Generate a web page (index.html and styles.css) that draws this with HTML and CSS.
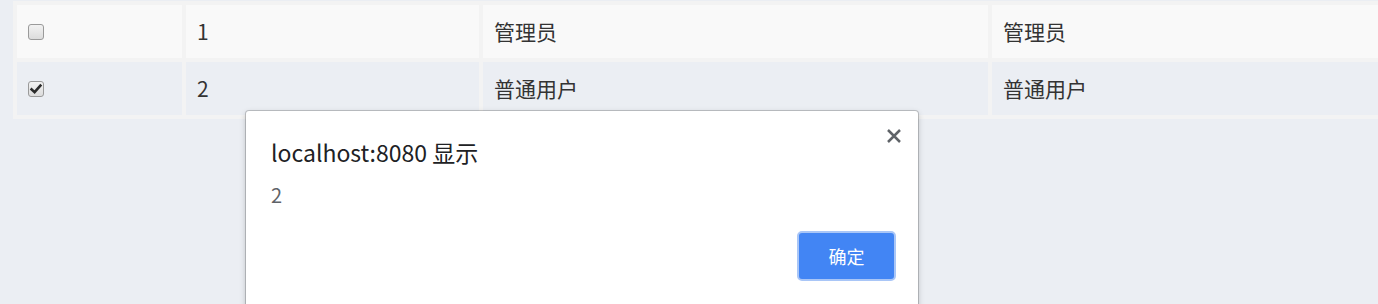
FILE: index.html
```html
<!DOCTYPE html>
<html lang="zh">
<head>
<meta charset="utf-8">
<title>用户列表</title>
<link rel="stylesheet" href="styles.css">
</head>
<body>
<div class="page">
  <table class="grid">
    <colgroup>
      <col class="c-check"><col class="c-id"><col class="c-name"><col class="c-desc">
    </colgroup>
    <tbody>
      <tr class="row odd">
        <td><span class="check"></span></td>
        <td>1</td>
        <td>管理员</td>
        <td>管理员</td>
      </tr>
      <tr class="row even">
        <td><span class="check checked"><svg viewBox="0 0 16 16" width="16" height="16"><path d="M3.6 8.4 L6.6 11.2 L12.4 4.6" fill="none" stroke="#2b2b2b" stroke-width="2.6" stroke-linecap="square" stroke-linejoin="miter"/></svg></span></td>
        <td>2</td>
        <td>普通用户</td>
        <td>普通用户</td>
      </tr>
    </tbody>
  </table>
</div>

<div class="dialog" role="alertdialog">
  <div class="dialog-head">
    <div class="dialog-title">localhost:8080 显示</div>
    <button class="dialog-close" aria-label="关闭"><svg viewBox="0 0 16 16" width="16" height="16"><path d="M2 2 L14 14 M14 2 L2 14" stroke="#5f6368" stroke-width="2.5" fill="none"/></svg></button>
  </div>
  <div class="dialog-msg">2</div>
  <div class="dialog-actions">
    <button class="btn-ok">确定</button>
  </div>
</div>
</body>
</html>
```

FILE: styles.css
```css
html, body {
  margin: 0;
  padding: 0;
}
body {
  width: 1378px;
  height: 304px;
  overflow: hidden;
  background: #ebeef3;
  font-family: "Noto Sans CJK SC", "Noto Sans", sans-serif;
  color: #333;
}
.page {
  padding: 1px 0 0 13px;
}
.grid {
  table-layout: fixed;
  width: 1483px;
  border-collapse: separate;
  border-spacing: 4px;
  background: #f3f3f3;
  font-size: 21px;
}
.c-check { width: 165px; }
.c-id { width: 293px; }
.c-name { width: 505px; }
.c-desc { width: 500px; }
.grid td {
  height: 53px;
  padding: 0 0 0 11px;
  vertical-align: middle;
  box-sizing: border-box;
  line-height: 1;
}
.row.odd td { background: #f9f9f9; }
.row.even td { background: #ebeef3; }
.check {
  display: block;
  width: 16px;
  height: 16px;
  box-sizing: border-box;
  border: 1px solid #9a9a9a;
  border-radius: 3px;
  background: linear-gradient(#f2f2f2, #dcdcdc);
  position: relative;
  margin-top: 1px;
}
.check svg {
  position: absolute;
  left: -1px;
  top: -1px;
}

.dialog {
  position: absolute;
  left: 246px;
  top: 111px;
  width: 672px;
  height: 220px;
  box-sizing: border-box;
  background: #fff;
  border-radius: 3px;
  box-shadow: 0 0 0 1px rgba(0,0,0,0.18), 0 2px 6px rgba(0,0,0,0.22);
  padding: 0 22px 0 25px;
}
.dialog-head {
  display: flex;
  justify-content: space-between;
  align-items: flex-start;
}
.dialog-title {
  margin-top: 26px;
  font-size: 23px;
  line-height: 30px;
  color: #202124;
}
.dialog-close {
  margin-top: 17px;
  margin-right: -6px;
  padding: 0;
  border: 0;
  background: none;
  width: 16px;
  height: 16px;
}
.dialog-msg {
  margin-top: 16px;
  font-size: 20px;
  line-height: 24px;
  color: #5f6368;
}
.dialog-actions {
  display: flex;
  justify-content: flex-end;
  margin-top: 24px;
}
.btn-ok {
  width: 99px;
  height: 50px;
  box-sizing: border-box;
  border: 2px solid #a9c6f7;
  border-radius: 5px;
  background: #4285f4;
  color: #fff;
  font-family: "Noto Sans CJK SC", sans-serif;
  font-size: 18px;
  padding: 0;
}
```
